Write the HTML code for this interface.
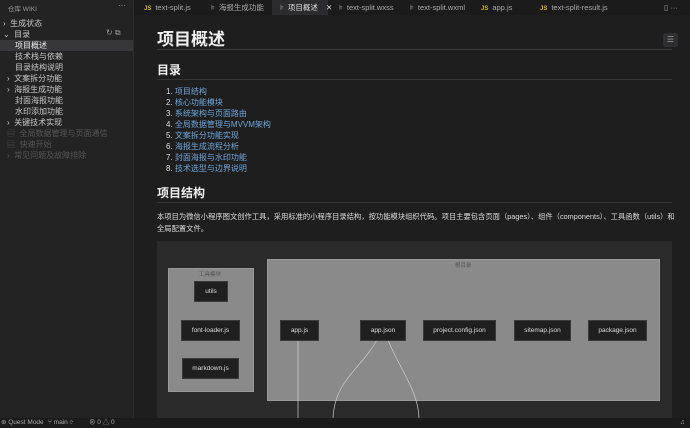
<!DOCTYPE html>
<html><head><meta charset="utf-8"><style>
*{margin:0;padding:0;box-sizing:border-box}
body{width:690px;height:428px;overflow:hidden;background:#1e1e1f;font-family:"Liberation Sans","Noto Sans CJK SC",sans-serif;color:#ccc;position:relative}
.abs{position:absolute;white-space:nowrap}
#side{position:absolute;left:0;top:0;width:134px;height:418px;background:#232324;border-right:1px solid #2c2c2c}
.si{position:absolute;font-size:8px;color:#c8c8c8;white-space:nowrap}
#tabs{position:absolute;left:134px;top:0;width:556px;height:15px;background:#1b1b1c}
.tab{position:absolute;top:0;height:15px;font-size:7.5px;color:#aaa;line-height:15px;white-space:nowrap}
.js{color:#c9b93c;font-size:6px;font-weight:bold;margin-right:4px}
.md{color:#999;margin-right:4px}
#status{position:absolute;left:0;top:418px;width:690px;height:10px;background:#1b1b1c;font-size:6.5px;color:#aaa;line-height:10px}
.lst{position:absolute;left:166px;font-size:8px;color:#ddd;white-space:nowrap}
.lst span{color:#6ea6d8}
.bx{position:absolute;background:#1f1f20;color:#ddd;font-size:6.5px;text-align:center;border:1px solid #3a3a3a}
</style></head><body>
<div id="side">
<div class="si" style="left:8px;top:3px;color:#999;font-size:6.5px">仓库 WIKI</div>
<div class="si" style="left:118px;top:1px;color:#999">···</div>
<div class="si" style="left:3px;top:18px">›&nbsp; 生成状态</div>
<div class="si" style="left:3px;top:29px">⌄&nbsp; 目录</div>
<div class="si" style="left:106px;top:28px;color:#999">↻ ⧉</div>
<div style="position:absolute;left:0;top:40px;width:133px;height:11px;background:#37373a"></div>
<div class="si" style="left:15px;top:40px;color:#eee">项目概述</div>
<div class="si" style="left:15px;top:51px">技术栈与依赖</div>
<div class="si" style="left:15px;top:62px">目录结构说明</div>
<div class="si" style="left:7px;top:73px">›&nbsp; 文案拆分功能</div>
<div class="si" style="left:7px;top:84px">›&nbsp; 海报生成功能</div>
<div class="si" style="left:15px;top:95px">封面海报功能</div>
<div class="si" style="left:15px;top:106px">水印添加功能</div>
<div class="si" style="left:7px;top:117px">›&nbsp; 关键技术实现</div>
<div class="si" style="left:7px;top:128px;color:#555">▤&nbsp; 全局数据管理与页面通信</div>
<div class="si" style="left:7px;top:139px;color:#555">▤&nbsp; 快速开始</div>
<div class="si" style="left:7px;top:150px;color:#555">›&nbsp; 常见问题及故障排除</div>
</div>
<div id="tabs">
<div class="tab" style="left:10px"><span class="js">JS</span>text-split.js</div>
<div class="tab" style="left:77px"><span class="md">⊧</span>海报生成功能</div>
<div class="tab" style="left:138px;width:56px;background:#2c2c2e;padding-left:8px;color:#ddd"><span class="md">⊧</span>项目概述 <span style="margin-left:6px">✕</span></div>
<div class="tab" style="left:205px"><span class="md">⊧</span>text-split.wxss</div>
<div class="tab" style="left:276px"><span class="md">⊧</span>text-split.wxml</div>
<div class="tab" style="left:347px"><span class="js">JS</span>app.js</div>
<div class="tab" style="left:406px"><span class="js">JS</span>text-split-result.js</div>
<div class="tab" style="left:530px">▯ ···</div>
</div>
<div class="abs" style="left:157px;top:25px;font-size:17px;font-weight:bold;color:#eee">项目概述</div>
<div style="position:absolute;left:663px;top:33px;width:15px;height:14px;background:#2e2e30;border-radius:2px;color:#999;font-size:8px;text-align:center;line-height:14px">☰</div>
<div style="position:absolute;left:157px;top:49px;width:515px;height:1px;background:#3a3a3a"></div>
<div class="abs" style="left:157px;top:61px;font-size:12px;font-weight:bold;color:#eee">目录</div>
<div style="position:absolute;left:157px;top:79px;width:515px;height:1px;background:#333"></div>
<div class="lst" style="top:86px">1. <span>项目结构</span></div>
<div class="lst" style="top:97px">2. <span>核心功能模块</span></div>
<div class="lst" style="top:108px">3. <span>系统架构与页面路由</span></div>
<div class="lst" style="top:119px">4. <span>全局数据管理与MVVM架构</span></div>
<div class="lst" style="top:130px">5. <span>文案拆分功能实现</span></div>
<div class="lst" style="top:141px">6. <span>海报生成流程分析</span></div>
<div class="lst" style="top:152px">7. <span>封面海报与水印功能</span></div>
<div class="lst" style="top:163px">8. <span>技术选型与边界说明</span></div>
<div class="abs" style="left:157px;top:184px;font-size:12px;font-weight:bold;color:#eee">项目结构</div>
<div style="position:absolute;left:157px;top:202px;width:515px;height:1px;background:#333"></div>
<div style="position:absolute;left:157px;top:211px;width:518px;font-size:7.3px;line-height:12px;color:#ddd">本项目为微信小程序图文创作工具，采用标准的小程序目录结构，按功能模块组织代码。项目主要包含页面（pages）、组件（components）、工具函数（utils）和全局配置文件。</div>
<div style="position:absolute;left:157px;top:241px;width:515px;height:177px;background:#2a2a2b"></div>
<div style="position:absolute;left:168px;top:268px;width:86px;height:124px;background:#8a8a8a;border:1px solid #999"></div>
<div class="abs" style="left:199px;top:270px;font-size:5.5px;color:#555">工具模块</div>
<div style="position:absolute;left:267px;top:259px;width:393px;height:142px;background:#8a8a8a;border:1px solid #999"></div>
<div class="abs" style="left:455px;top:261px;font-size:5.5px;color:#555">根目录</div>
<svg style="position:absolute;left:0;top:0" width="690" height="428"><g stroke="#ccc" stroke-width="0.7" fill="none"><path d="M298 340 V418"/><path d="M377 340 C360 370 335 380 333 418"/><path d="M388 340 C400 370 418 390 419 418"/></g></svg>
<div class="bx" style="left:194px;top:281px;width:34px;height:21px;line-height:19px">utils</div>
<div class="bx" style="left:181px;top:320px;width:59px;height:21px;line-height:19px">font-loader.js</div>
<div class="bx" style="left:182px;top:358px;width:57px;height:21px;line-height:19px">markdown.js</div>
<div class="bx" style="left:280px;top:320px;width:39px;height:21px;line-height:19px">app.js</div>
<div class="bx" style="left:360px;top:320px;width:46px;height:21px;line-height:19px">app.json</div>
<div class="bx" style="left:423px;top:320px;width:73px;height:21px;line-height:19px">project.config.json</div>
<div class="bx" style="left:514px;top:320px;width:57px;height:21px;line-height:19px">sitemap.json</div>
<div class="bx" style="left:588px;top:320px;width:59px;height:21px;line-height:19px">package.json</div>
<div id="status">
<span class="abs" style="left:1px">⊛ Quest Mode</span>
<span class="abs" style="left:48px">⑂ main ⟳</span>
<span class="abs" style="left:89px">⊗ 0 △ 0</span>
<span class="abs" style="left:680px">♫</span>
</div>
</body></html>
